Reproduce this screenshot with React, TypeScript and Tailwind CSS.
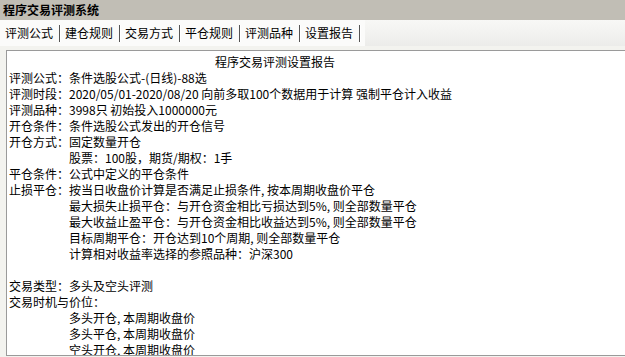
import React from "react";

const tabs = ["评测公式", "建仓规则", "交易方式", "平仓规则", "评测品种", "设置报告"];

// report lines: label + text, or indented text
const lines: { label?: string; text: string; indent?: boolean }[] = [
  { label: "评测公式：", text: "条件选股公式-(日线)-88选" },
  { label: "评测时段：", text: "2020/05/01-2020/08/20 向前多取100个数据用于计算 强制平仓计入收益" },
  { label: "评测品种：", text: "3998只 初始投入1000000元" },
  { label: "开仓条件：", text: "条件选股公式发出的开仓信号" },
  { label: "开仓方式：", text: "固定数量开仓" },
  { indent: true, text: "股票：100股，期货/期权：1手" },
  { label: "平仓条件：", text: "公式中定义的平仓条件" },
  { label: "止损平仓：", text: "按当日收盘价计算是否满足止损条件, 按本周期收盘价平仓" },
  { indent: true, text: "最大损失止损平仓：与开仓资金相比亏损达到5%, 则全部数量平仓" },
  { indent: true, text: "最大收益止盈平仓：与开仓资金相比收益达到5%, 则全部数量平仓" },
  { indent: true, text: "目标周期平仓：开仓达到10个周期, 则全部数量平仓" },
  { indent: true, text: "计算相对收益率选择的参照品种：沪深300" },
  { text: "" },
  { label: "交易类型：", text: "多头及空头评测" },
  { label: "交易时机与价位：", text: "" },
  { indent: true, text: "多头开仓, 本周期收盘价" },
  { indent: true, text: "多头平仓, 本周期收盘价" },
  { indent: true, text: "空头开仓, 本周期收盘价" },
];

export default function App() {
  return (
    <div
      className="w-[625px] h-[357px] overflow-hidden bg-[#f3f3ef] text-black flex flex-col"
      style={{ fontFamily: "'Noto Sans CJK SC', 'Noto Sans', sans-serif" }}
    >
      {/* Title bar */}
      <div className="h-[20px] shrink-0 bg-[#c1beb5] flex items-center pl-[3px]">
        <span className="text-[12px] font-bold leading-none">程序交易评测系统</span>
      </div>

      {/* Tabs */}
      <div className="h-[26px] shrink-0 flex bg-gradient-to-b from-[#f8f8f6] to-[#ececea]">
        <div className="flex pl-[5px] bg-[#fbfbfa]">
          {tabs.map((t) => (
            <div key={t} className="w-[60px] flex items-center">
              <span className="text-[12px] leading-none w-[54px]">{t}</span>
              <span className="w-[2px] h-[17px] border-l border-[#555] border-r border-r-white" />
            </div>
          ))}
        </div>
        <div className="flex-1" />
      </div>

      {/* Report box */}
      <div className="mt-[4px] ml-[6px] w-[640px] h-[306px] border border-[#9a9a9a] bg-white pt-[3px] pl-[2px] text-[12px] leading-[16px] whitespace-nowrap overflow-hidden">
        <div className="pl-[206px]">程序交易评测设置报告</div>
        {lines.map((l, i) => (
          <div key={i} className="flex h-[16px]">
            {l.label !== undefined && <span>{l.label}</span>}
            <span className={l.indent ? "pl-[60px]" : ""}>{l.text}</span>
          </div>
        ))}
      </div>
    </div>
  );
}
